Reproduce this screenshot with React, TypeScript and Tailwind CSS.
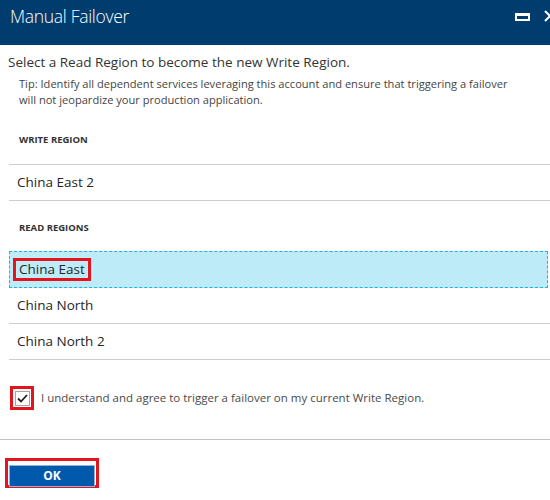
import React from 'react';

const readRegions = ['China East', 'China North', 'China North 2'];

export default function App() {
  return (
    <div className="w-[550px] h-[500px] bg-white overflow-hidden font-['Open_Sans',sans-serif] text-[#252525]">
      {/* Header */}
      <div className="h-[45px] bg-[#003c6e] flex items-start justify-between pl-[10px]">
        <h1 className="h-[32px] leading-[32px] text-[17.5px] font-light text-white tracking-[-0.3px]">Manual Failover</h1>
        <div className="flex items-center gap-[14px] h-[33px] mr-[-6px]">
          <div className="w-[15px] h-[8px] border-2 border-t-[3px] border-white" />
          <svg width="12" height="12" viewBox="0 0 12 12" className="mt-[-1px]">
            <path d="M1 1 L11 11 M11 1 L1 11" stroke="white" strokeWidth="2" />
          </svg>
        </div>
      </div>

      {/* Body */}
      <div className="pt-[7px]">
        <p className="pl-[8px] text-[13.5px] leading-[20px] text-[#333]">
          Select a Read Region to become the new Write Region.
        </p>
        <p className="pl-[19px] pr-[28px] mt-[4px] text-[11.1px] leading-[16px] text-[#444]">
          Tip: Identify all dependent services leveraging this account and ensure that triggering a failover will not jeopardize your production application.
        </p>

        <div className="ml-[9px] mt-[20px]">
          <div className="pl-[10px] h-[24px] text-[9.5px] font-bold uppercase text-[#333] leading-[24px]">Write Region</div>
          <div className="mt-[12px] border-t border-[#cdcdcd]" />
          <div className="h-[36px] border-b border-[#cdcdcd] pl-[8px] flex items-center text-[13.5px]">China East 2</div>

          <div className="pl-[10px] mt-[15px] h-[24px] text-[9.5px] font-bold uppercase text-[#333] leading-[24px]">Read Regions</div>
          <div className="mt-[11px]">
            {readRegions.map((r, i) =>
              i === 0 ? (
                <div key={r} className="h-[37px] bg-[#bdecf8] border border-dashed border-[#19b3e8] mr-[2px] pl-[3px] flex items-center">
                  <span className="border-[3px] border-[#e3141e] px-[3px] h-[23px] leading-[17px] text-[13.5px]">{r}</span>
                </div>
              ) : (
                <div key={r} className="h-[36px] border-b border-[#cdcdcd] pl-[8px] flex items-center text-[13.5px]">{r}</div>
              )
            )}
          </div>
        </div>

        {/* Confirm */}
        <div className="flex items-center pl-[10px] mt-[26px] h-[24px]">
          <div className="w-[24px] h-[24px] border-[3px] border-[#e3141e] flex items-center justify-center">
            <div className="w-[15px] h-[15px] border border-[#a6a6a6] flex items-center justify-center bg-white">
              <svg width="11" height="9" viewBox="0 0 11 9">
                <path d="M1 4.5 L4 7.5 L10 1" stroke="#222" strokeWidth="1.8" fill="none" />
              </svg>
            </div>
          </div>
          <span className="ml-[7px] text-[11.5px] text-[#4a4a4a]">I understand and agree to trigger a failover on my current Write Region.</span>
        </div>

        <div className="mt-[29px] border-t border-[#c2c2c2]" />

        <div className="pl-[5px] pt-[18px]">
          <div className="w-[94px] h-[30px] border-[3px] border-[#e3141e] p-[1px]">
            <button className="w-full h-full bg-[#0059ad] border border-[#8fb3d9] text-white text-[12px] font-bold">OK</button>
          </div>
        </div>
      </div>
    </div>
  );
}
